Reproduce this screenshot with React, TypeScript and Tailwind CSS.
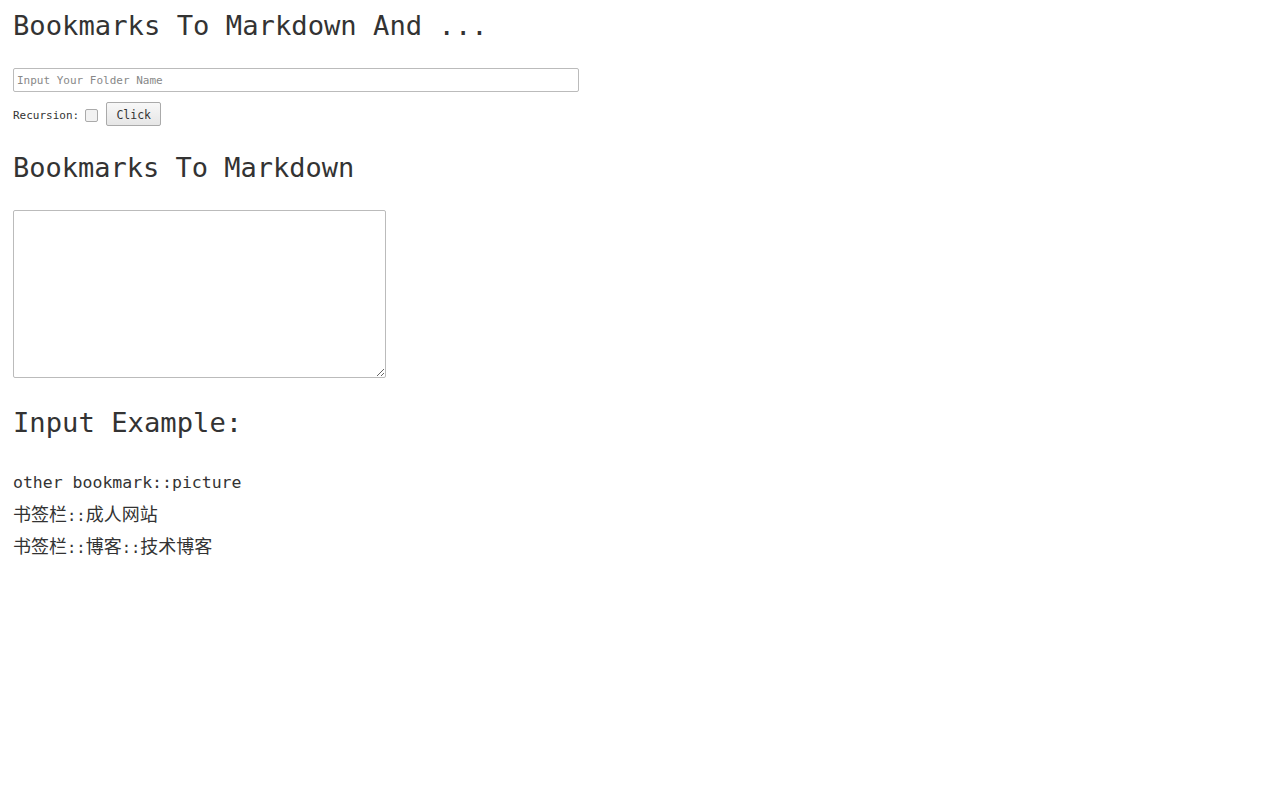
import React from "react";

const mono = "font-['DejaVu_Sans_Mono','Liberation_Mono','Noto_Sans_CJK_SC',monospace]";
const sep = "text-[15.5px]";

export default function App() {
    return (
        <div className={`${mono} px-[13px] text-[#333] bg-white min-h-[800px]`}>
            <h1 className="pt-[10px] text-[27.2px] leading-[32px]">
                Bookmarks To Markdown And ...
            </h1>

            <input
                type="text"
                placeholder="Input Your Folder Name"
                className="mt-[26px] block w-[566px] h-[24px] border border-[#bbb] rounded-[2px] px-[3px] text-[11px] placeholder:text-[#888] outline-none"
            />

            <div className="mt-[10px] flex items-center h-[24px] text-[11px]">
                <span className="pt-[5px]">Recursion:</span>
                <input
                    type="checkbox"
                    className="ml-[6px] mt-[2px] w-[13px] h-[13px] appearance-none border border-[#aaa] rounded-[2px] bg-[#f2f2f2]"
                />
                <button className="ml-[8px] w-[55px] h-[24px] pt-[4px] border border-[#aaa] rounded-[2px] bg-linear-to-b from-[#f8f8f8] to-[#e6e6e6] text-[11.5px] text-[#333]">
                    Click
                </button>
            </div>

            <h2 className="mt-[26px] text-[27px] leading-[32px]">
                Bookmarks To Markdown
            </h2>

            <textarea className="mt-[26px] block w-[373px] h-[168px] border border-[#bbb] rounded-[2px] outline-none" />

            <h2 className="mt-[29px] text-[27.2px] leading-[32px]">Input Example:</h2>

            <div className="mt-[28px] leading-[32px]">
                <p className="h-[32px] text-[16.5px]">other bookmark::picture</p>
                <p className="h-[32px] text-[18px]">
                    <span>书签栏</span>
                    <span className={sep}>::</span>
                    <span>成人网站</span>
                </p>
                <p className="h-[32px] text-[18px]">
                    <span>书签栏</span>
                    <span className={sep}>::</span>
                    <span>博客</span>
                    <span className={sep}>::</span>
                    <span>技术博客</span>
                </p>
            </div>
        </div>
    );
}
